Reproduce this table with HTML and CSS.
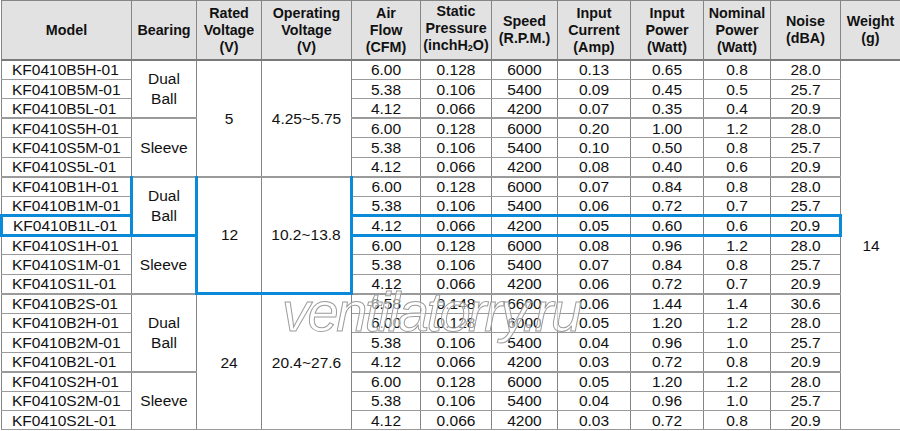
FILE: index.html
```html
<!DOCTYPE html>
<html>
<head>
<meta charset="utf-8">
<link rel="stylesheet" href="styles.css">
</head>
<body>
<div class="sheet">
<table class="spec">
<colgroup>
<col class="c-model"><col class="c-bear"><col class="c-rated"><col class="c-op"><col class="c-air"><col class="c-static"><col class="c-speed"><col class="c-cur"><col class="c-pow"><col class="c-nom"><col class="c-noise"><col class="c-weight">
</colgroup>
<thead>
<tr>
<th>Model</th>
<th>Bearing</th>
<th>Rated<br>Voltage<br>(V)</th>
<th>Operating<br>Voltage<br>(V)</th>
<th>Air<br>Flow<br>(CFM)</th>
<th>Static<br>Pressure<br>(inchH<span class="sub">2</span>O)</th>
<th>Speed<br>(R.P.M.)</th>
<th>Input<br>Current<br>(Amp)</th>
<th>Input<br>Power<br>(Watt)</th>
<th>Nominal<br>Power<br>(Watt)</th>
<th>Noise<br>(dBA)</th>
<th>Weight<br>(g)</th>
</tr>
</thead>
<tbody>
<tr><td class="model">KF0410B5H-01</td><td rowspan="3" class="merged">Dual<br>Ball</td><td rowspan="6">5</td><td rowspan="6">4.25~5.75</td><td>6.00</td><td>0.128</td><td>6000</td><td>0.13</td><td>0.65</td><td>0.8</td><td>28.0</td><td rowspan="19">14</td></tr>
<tr><td class="model">KF0410B5M-01</td><td>5.38</td><td>0.106</td><td>5400</td><td>0.09</td><td>0.45</td><td>0.5</td><td>25.7</td></tr>
<tr><td class="model">KF0410B5L-01</td><td>4.12</td><td>0.066</td><td>4200</td><td>0.07</td><td>0.35</td><td>0.4</td><td>20.9</td></tr>
<tr class="grp"><td class="model">KF0410S5H-01</td><td rowspan="3">Sleeve</td><td>6.00</td><td>0.128</td><td>6000</td><td>0.20</td><td>1.00</td><td>1.2</td><td>28.0</td></tr>
<tr><td class="model">KF0410S5M-01</td><td>5.38</td><td>0.106</td><td>5400</td><td>0.10</td><td>0.50</td><td>0.8</td><td>25.7</td></tr>
<tr><td class="model">KF0410S5L-01</td><td>4.12</td><td>0.066</td><td>4200</td><td>0.08</td><td>0.40</td><td>0.6</td><td>20.9</td></tr>
<tr class="grp"><td class="model">KF0410B1H-01</td><td rowspan="3" class="merged hl-box">Dual<br>Ball</td><td rowspan="6" class="hl-left">12</td><td rowspan="6" class="hl-right">10.2~13.8</td><td>6.00</td><td>0.128</td><td>6000</td><td>0.07</td><td>0.84</td><td>0.8</td><td>28.0</td></tr>
<tr><td class="model">KF0410B1M-01</td><td>5.38</td><td>0.106</td><td>5400</td><td>0.06</td><td>0.72</td><td>0.7</td><td>25.7</td></tr>
<tr class="hl-row"><td class="model hl-box">KF0410B1L-01</td><td>4.12</td><td>0.066</td><td>4200</td><td>0.05</td><td>0.60</td><td>0.6</td><td class="hl-end">20.9</td></tr>
<tr><td class="model">KF0410S1H-01</td><td rowspan="3">Sleeve</td><td>6.00</td><td>0.128</td><td>6000</td><td>0.08</td><td>0.96</td><td>1.2</td><td>28.0</td></tr>
<tr><td class="model">KF0410S1M-01</td><td>5.38</td><td>0.106</td><td>5400</td><td>0.07</td><td>0.84</td><td>0.8</td><td>25.7</td></tr>
<tr><td class="model">KF0410S1L-01</td><td>4.12</td><td>0.066</td><td>4200</td><td>0.06</td><td>0.72</td><td>0.7</td><td>20.9</td></tr>
<tr class="grp"><td class="model">KF0410B2S-01</td><td rowspan="4" class="merged">Dual<br>Ball</td><td rowspan="7">24</td><td rowspan="7">20.4~27.6</td><td>6.58</td><td>0.148</td><td>6600</td><td>0.06</td><td>1.44</td><td>1.4</td><td>30.6</td></tr>
<tr><td class="model">KF0410B2H-01</td><td>6.00</td><td>0.128</td><td>6000</td><td>0.05</td><td>1.20</td><td>1.2</td><td>28.0</td></tr>
<tr><td class="model">KF0410B2M-01</td><td>5.38</td><td>0.106</td><td>5400</td><td>0.04</td><td>0.96</td><td>1.0</td><td>25.7</td></tr>
<tr><td class="model">KF0410B2L-01</td><td>4.12</td><td>0.066</td><td>4200</td><td>0.03</td><td>0.72</td><td>0.8</td><td>20.9</td></tr>
<tr class="grp"><td class="model">KF0410S2H-01</td><td rowspan="3">Sleeve</td><td>6.00</td><td>0.128</td><td>6000</td><td>0.05</td><td>1.20</td><td>1.2</td><td>28.0</td></tr>
<tr><td class="model">KF0410S2M-01</td><td>5.38</td><td>0.106</td><td>5400</td><td>0.04</td><td>0.96</td><td>1.0</td><td>25.7</td></tr>
<tr><td class="model">KF0410S2L-01</td><td>4.12</td><td>0.066</td><td>4200</td><td>0.03</td><td>0.72</td><td>0.8</td><td>20.9</td></tr>
</tbody>
</table>
<div class="watermark">ventilatorry.ru</div>
</div>
</body>
</html>
```

FILE: styles.css
```css
html, body {
  margin: 0;
  padding: 0;
  background: #ffffff;
}

.sheet {
  position: relative;
  width: 900px;
  height: 431px;
  overflow: hidden;
}

.spec {
  border-collapse: collapse;
  table-layout: fixed;
  width: 899px;
  font-family: "Liberation Sans", Arial, sans-serif;
  color: #111111;
  border: 1px solid #6a6a6a;
}

.c-model { width: 130px; }
.c-bear { width: 65px; }
.c-rated { width: 65px; }
.c-op { width: 90px; }
.c-air { width: 69px; }
.c-static { width: 71px; }
.c-speed { width: 66px; }
.c-cur { width: 73px; }
.c-pow { width: 73px; }
.c-nom { width: 67px; }
.c-noise { width: 70px; }
.c-weight { width: 60px; }

.spec th {
  background: #e2e2e2;
  font-weight: bold;
  font-size: 14.3px;
  line-height: 17px;
  height: 58px;
  padding: 0;
  text-align: center;
  vertical-align: middle;
  border: 1px solid #858585;
  border-bottom: 2px solid #7a7a7a;
}

.sub {
  font-size: 9px;
  vertical-align: -1px;
}

.spec tbody tr {
  height: 19.44px;
}

.spec td {
  font-size: 15.5px;
  line-height: 17px;
  padding: 0;
  text-align: center;
  vertical-align: middle;
  border: 1px solid #9a9a9a;
  border-left-color: #858585;
  border-right-color: #858585;
  white-space: nowrap;
}

.spec tr.grp td {
  border-top: 2px solid #9a9a9a;
}

.spec td.model {
  text-align: left;
  padding-left: 10px;
}

.spec td.merged {
  line-height: 20px;
}

/* blue highlight */
.spec td.hl-box {
  border: 3px solid #0a8ad8;
}

.spec td.hl-left {
  border-top: 3px solid #0a8ad8;
  border-bottom: 3px solid #0a8ad8;
  border-left: 3px solid #0a8ad8;
}

.spec td.hl-right {
  border-top: 3px solid #0a8ad8;
  border-bottom: 3px solid #0a8ad8;
  border-right: 3px solid #0a8ad8;
}

.spec tr.hl-row td {
  border-top: 3px solid #0a8ad8;
  border-bottom: 3px solid #0a8ad8;
}

.spec tr.hl-row td.hl-end {
  border-right: 3px solid #0a8ad8;
}

.watermark {
  position: absolute;
  left: 282px;
  top: 282px;
  font-family: "Liberation Sans", Arial, sans-serif;
  font-style: italic;
  font-size: 56px;
  letter-spacing: -2.5px;
  line-height: 60px;
  color: rgba(255, 255, 255, 0.55);
  -webkit-text-stroke: 1px #9c9c9c;
  white-space: nowrap;
  pointer-events: none;
}
```
